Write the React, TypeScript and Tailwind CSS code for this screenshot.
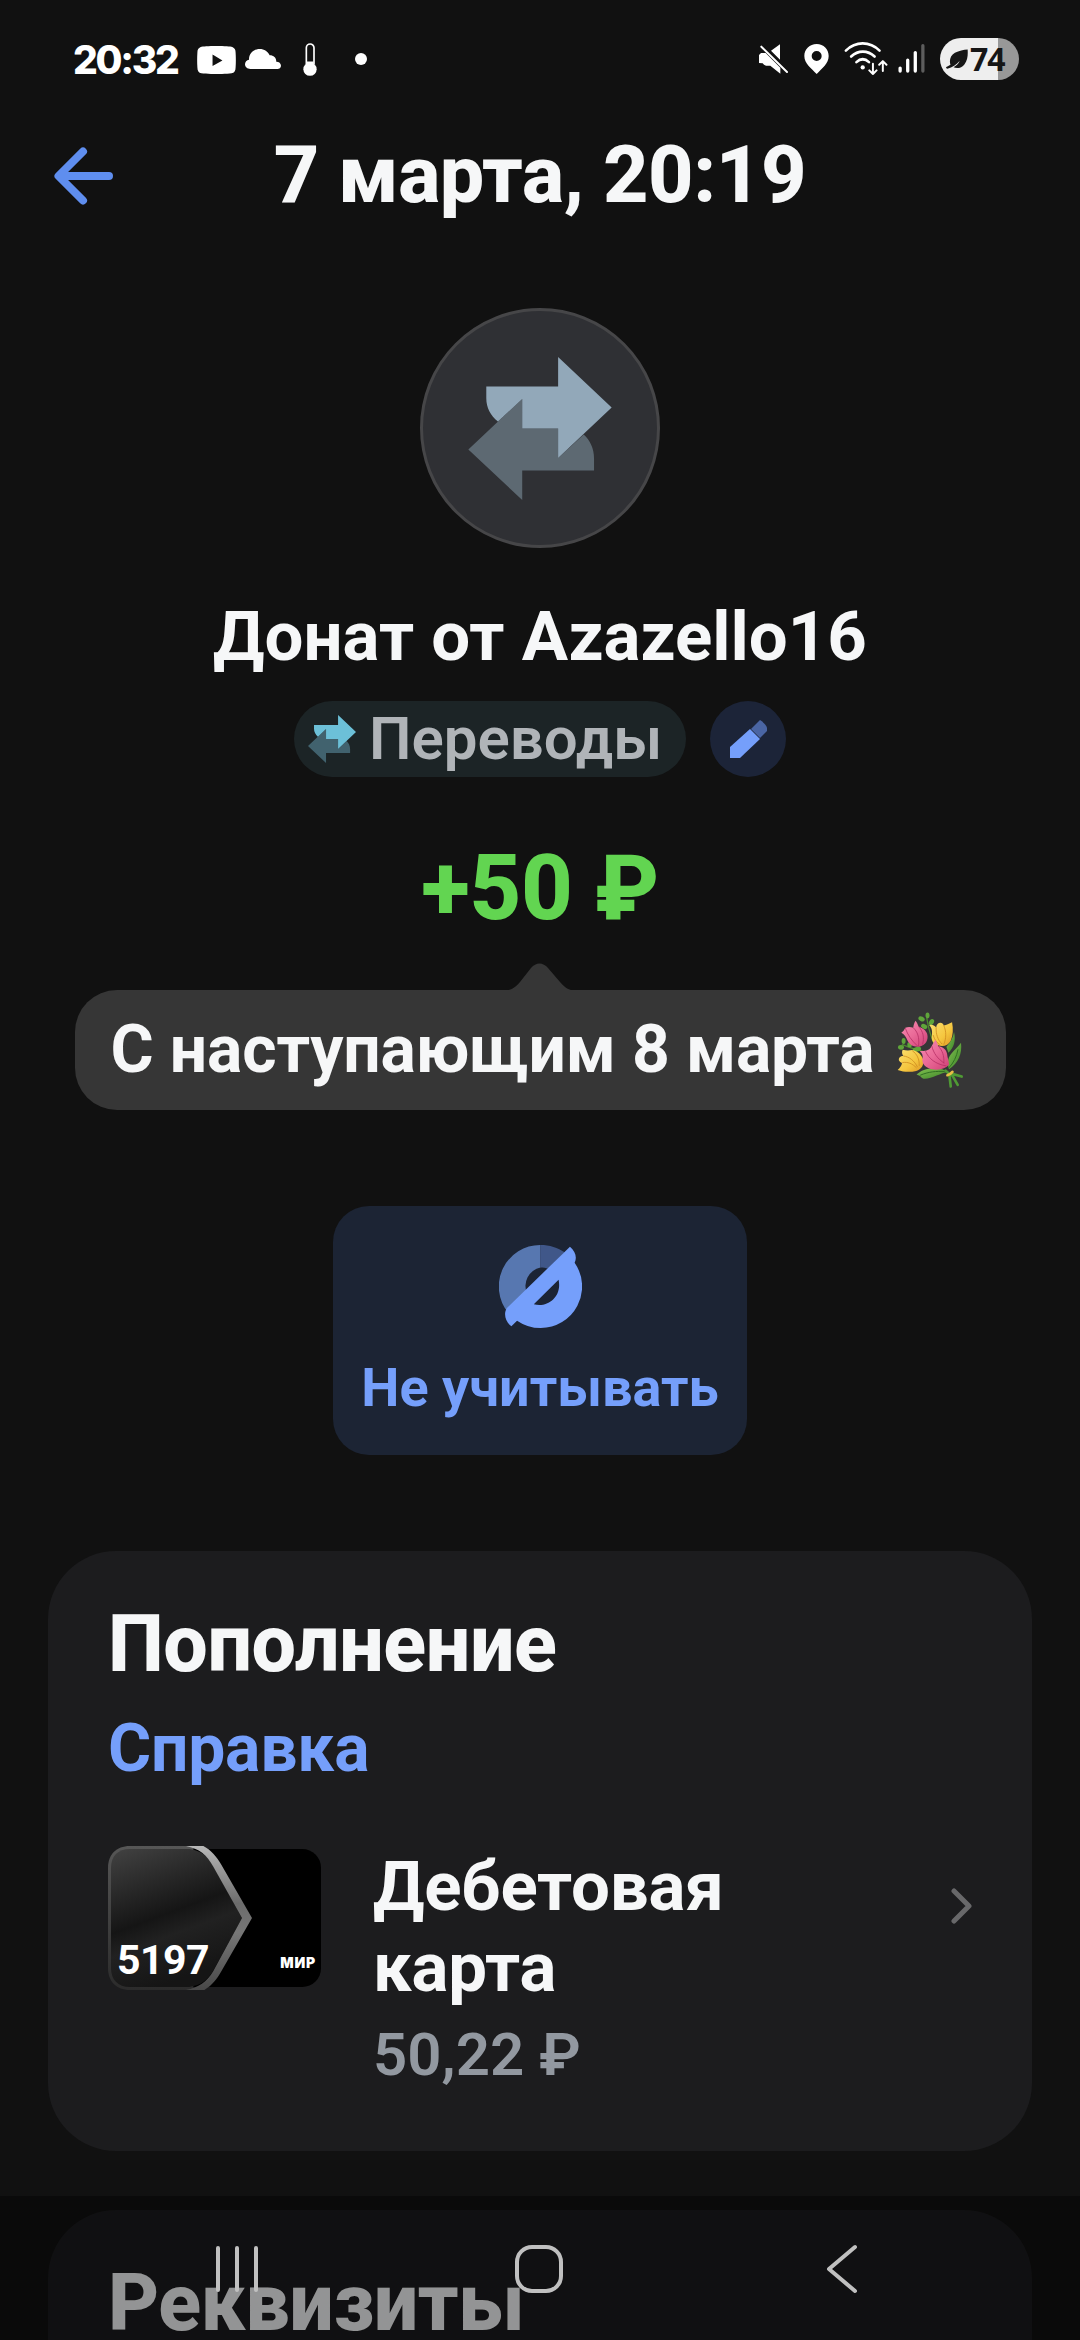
import type { ReactNode } from 'react';

interface TransferIconProps {
  front: string;
  back: string;
  className?: string;
}

function TransferIcon({ front, back, className }: TransferIconProps) {
  return (
    <svg viewBox="204 199 431 430" className={className} aria-hidden="true">
      <path fill={back} d="M366 325 204 477l162 152v-89h216v-36c0-30-12-54-31-72l-77 71v-89H366z" />
      <path fill={front} d="M258 288h216v-89l161 152-161 152v-89H366v-89l-73 68c-22-18-35-42-35-70z" />
    </svg>
  );
}

function StatusBar() {
  return (
    <div className="flex h-[120px] shrink-0 items-center justify-between pl-[73px] pr-[61px] text-white">
      <div className="flex h-full items-center">
        <span className="w-[124px] font-[Inter] text-[39px] font-extrabold leading-[48px] tracking-[-2.3px]">
          20:32
        </span>
        <svg viewBox="470 75 118 85" className="h-[28px] w-[39px]" aria-hidden="true">
          <path
            fill="#fff"
            fillRule="evenodd"
            d="M529 75c25 0 42 1 48 3 7 3 10 8 10 17 1 15 1 30 0 45 0 10-4 16-12 18-24 3-68 3-92 0-8-2-12-8-12-18-1-15-1-30 0-45 0-9 3-14 10-17 6-2 23-3 48-3zm-12 26v35l30-17z"
          />
        </svg>
        <svg viewBox="616 84 108 60" className="ml-[9px] mt-[-2px] h-[20px] w-[36px]" aria-hidden="true">
          <path fill="#fff" d="M632 144c-9 0-16-6-16-14 0-7 5-13 12-14 0-19 14-32 32-32 14 0 25 8 30 19 12 0 20 7 20 19 8 0 14 5 14 12 0 6-5 10-11 10z" />
        </svg>
        <svg viewBox="790 67 42 98" className="ml-[22px] mt-[-2px] h-[33px] w-[14px]" aria-hidden="true">
          <path fill="none" stroke="#fff" strokeWidth="5" d="M800 130V81a11 11 0 0 1 23 0v49" />
          <circle cx="811" cy="145" r="20" fill="#fff" />
          <path fill="#fff" d="M801 122h21v12h-21z" />
        </svg>
        <span className="ml-[38px] mt-[-2px] size-3 rounded-full bg-white" />
      </div>
      <div className="flex h-full items-center">
        <svg viewBox="118 72 87 90" className="mt-[-2px] h-[30px] w-[29px]" aria-hidden="true">
          <path fill="#fff" d="M181 73v46l-27-27zM124 99h14l44 44v18l-30-24h-13l-6-3-4-4-11-1V105z" />
          <path stroke="#fff" strokeWidth="6" strokeLinecap="round" d="M125 80 202 156" />
        </svg>
        <svg viewBox="254 71 73 90" className="ml-[16px] mt-[-3px] h-[30px] w-[25px]" aria-hidden="true">
          <path
            fill="#fff"
            fillRule="evenodd"
            d="M291 71c21 0 36 16 36 36 0 23-20 37-36 54-16-17-37-31-37-54 0-20 16-36 37-36zm0 21a15 15 0 1 0 0 30 15 15 0 0 0 0-30z"
          />
        </svg>
        <svg viewBox="373 65 132 100" className="ml-[15px] mt-[-3px] h-[33px] w-[44px]" aria-hidden="true">
          <g fill="none" stroke="#fff" strokeLinecap="round">
            <path strokeWidth="8" d="M378 91c30-29 72-29 102 0" />
            <path strokeWidth="8" d="M394 109c21-20 50-20 71 0" />
            <path strokeWidth="8" d="M410 126c12-11 26-11 38 0" />
            <path strokeWidth="6" strokeLinejoin="round" d="M460 131v31m-11-11 11 11 11-11M490 153v-30m-11 11 11-11 11 11" />
          </g>
          <circle cx="429" cy="142" r="6.500" fill="#fff" />
        </svg>
        <svg viewBox="534 72 81 88" className="ml-[10px] mt-[-3px] h-[29px] w-[27px]" aria-hidden="true">
          <g stroke="#fff" strokeWidth="10" strokeLinecap="round">
            <path d="M540 145v9M563 121v33M586 98v56" />
            <path stroke="#5d5d5d" d="M609 77v77" />
          </g>
        </svg>
        <div className="ml-[15px] mt-[-2px] flex h-[42px] w-[79px] items-center rounded-full bg-[linear-gradient(90deg,#eeeeee_58px,#989898_58px)] pl-[6px] text-[#161616]">
          <svg viewBox="679 86 64 58" className="h-[20px] w-[22px]" aria-hidden="true">
            <path fill="#161616" d="M692 132c-4-12-1-27 13-35 12-7 25-9 37-10 1 16 0 31-9 43-8 11-22 14-32 9 7-4 14-10 18-19-10 11-21 20-36 23-5 0-5-5 0-6z" />
          </svg>
          <span className="ml-[2px] font-['Open_Sans'] text-[32px] font-bold leading-[40px] tracking-[-1px]">74</span>
        </div>
      </div>
    </div>
  );
}

function Header() {
  return (
    <header className="relative flex h-[110px] shrink-0 items-center justify-center">
      <button aria-label="Назад" className="absolute left-[54px] top-[27px]">
        <svg viewBox="0 0 60 58" className="h-[58px] w-[60px]" fill="none" aria-hidden="true">
          <path stroke="#5f8eef" strokeWidth="8" strokeLinecap="round" strokeLinejoin="round" d="M29 4.500 4.500 29 29 53.500M5 29h50" />
        </svg>
      </button>
      <h1 className="text-[79px] font-extrabold leading-[92px] tracking-[-0.4px]">7 марта, 20:19</h1>
    </header>
  );
}

function Bouquet() {
  return (
    <svg viewBox="48 36 202 228" className="h-[76px] w-[67px] shrink-0" aria-hidden="true">
      <defs>
        <linearGradient id="pink" x1="0" y1="0" x2="1" y2="1">
          <stop offset="0" stopColor="#f58db0" />
          <stop offset="0.5" stopColor="#ea6a98" />
          <stop offset="1" stopColor="#cf3f75" />
        </linearGradient>
        <linearGradient id="yellow" x1="0" y1="0" x2="1" y2="1">
          <stop offset="0" stopColor="#fbe070" />
          <stop offset="0.6" stopColor="#f5c63e" />
          <stop offset="1" stopColor="#dd9724" />
        </linearGradient>
        <linearGradient id="leaf" x1="0" y1="0" x2="1" y2="1">
          <stop offset="0" stopColor="#82c250" />
          <stop offset="1" stopColor="#3c8428" />
        </linearGradient>
      </defs>
      <path fill="none" stroke="#4c8b2e" strokeWidth="4" strokeLinecap="round" d="M138 55c5 30 10 55 25 80M64 134c20 8 40 16 62 20" />
      <g fill="#5fa53a">
        <ellipse cx="140" cy="46" rx="6" ry="9" />
        <ellipse cx="122" cy="56" rx="10" ry="7" transform="rotate(25 122 56)" />
        <ellipse cx="152" cy="66" rx="7" ry="10" transform="rotate(30 152 66)" />
        <ellipse cx="130" cy="79" rx="10" ry="7" transform="rotate(30 130 79)" />
        <ellipse cx="68" cy="123" rx="6" ry="9" />
        <ellipse cx="60" cy="142" rx="9" ry="7" />
        <ellipse cx="86" cy="134" rx="7" ry="8" />
        <ellipse cx="108" cy="148" rx="13" ry="7" transform="rotate(-15 108 148)" />
      </g>
      <path fill="url(#leaf)" d="M220 96c6 26 0 48-17 62l-6-18c12-12 20-26 23-44z" />
      <path fill="url(#leaf)" d="M241 128c4 34-8 60-36 80-6-16-5-32 6-46 10-13 22-22 30-34z" />
      <path fill="url(#leaf)" d="M107 224c18-18 44-22 78-16l16 8c-20 2-46 20-70 21-10 0-8-8-24-13z" />
      <path fill="none" stroke="#2f6f22" strokeWidth="3" d="M232 148c-4 22-14 42-28 56M118 226c24-10 48-13 76-11" />
      <path
        fill="url(#yellow)"
        d="M145 75c8-3 15 0 21 7 1-9 6-14 13-14 5 0 8 3 10 8 8-2 16-6 25-10 4 20 3 40-4 56-7 14-22 19-38 14-14-4-21-14-19-28 2-13 1-23-8-33z"
      />
      <path fill="none" stroke="#d08e21" strokeWidth="2.500" d="M166 82c-1 20 5 38 18 50M189 76c8 18 8 38 0 58M157 105c4 14 10 22 20 29" />
      <path
        fill="url(#pink)"
        d="M61 98c5-3 9-8 12-15 8-3 16-3 24 0 1-8 3-15 7-21 4 5 6 10 9 17 13 5 23 12 26 23 5 18-5 35-24 38-17 2-30-6-36-20-4-10-9-18-18-22z"
      />
      <path fill="none" stroke="#b83267" strokeWidth="2.500" d="M73 84c7 20 19 38 37 54M97 83c13 12 19 28 16 55M113 79c14 15 18 34 12 54" />
      <path
        fill="url(#yellow)"
        d="M54 182c-2-8 4-14 13-14-4-7-5-12-2-19 10 3 19 3 29 1 17 3 28 14 33 29 3 16-5 30-21 34-18 4-37 4-56-3 8-7 12-13 13-21-4-1-7-3-9-7z"
      />
      <path fill="none" stroke="#d08e21" strokeWidth="2.500" d="M67 168c18 2 34 15 43 34M64 188c17-3 30 3 43 16M94 152c14 10 22 25 21 46" />
      <path
        fill="url(#pink)"
        d="M117 153c9 1 17 0 25-4 10-2 12-18 22-29 4 6 7 12 8 18 15 3 25 11 27 24 1 11 5 18 6 32-10 13-30 18-51 14-19-4-32-16-29-31 2-10-1-17-8-24z"
      />
      <path fill="none" stroke="#b83267" strokeWidth="2.500" d="M134 154c10 22 30 39 63 44M153 138c5 22 18 39 38 52M172 138c13 13 19 30 17 52" />
      <path stroke="#4f9a34" strokeWidth="8" strokeLinecap="round" d="m194 212 16 14M206 226l4 34M212 222l19 33M214 222l29 8" />
      <path stroke="#e8bf45" strokeWidth="8" strokeLinecap="round" d="M200 226c6-2 12-6 15-10" fill="none" />
    </svg>
  );
}

function Message({ children }: { children: ReactNode }) {
  return (
    <div className="mt-[24px] flex flex-col items-center">
      <svg viewBox="0 0 70 28" className="-mb-px h-[28px] w-[70px]" aria-hidden="true">
        <path fill="#363636" d="M0 28c6-1 10-3 15-9L26 5c5-6 12-6 17 0l12 14c5 6 9 8 15 9z" />
      </svg>
      <div className="flex h-[120px] w-[931px] items-center rounded-[42px] bg-[#363636] pl-[36px]">
        <p className="w-[786px] whitespace-nowrap text-[66px] font-bold leading-[80px] tracking-[-0.15px]">{children}</p>
        <Bouquet />
      </div>
    </div>
  );
}

function ExcludeIcon() {
  return (
    <svg viewBox="533 167 248 248" className="size-[83px]" aria-hidden="true">
      <path fill="#5777b0" d="M657 167A124 124 0 0 0 560 369L617 313A57 57 0 0 1 657 234z" />
      <path fill="#405789" d="M657 167c27 0 52 8 72 22l-49 49c-7-3-15-4-23-4z" />
      <path
        fill="#759ffb"
        fillRule="evenodd"
        d="M745 172c16 14 22 31 14 48A124 124 0 0 1 657 415A124 124 0 0 1 587 393l-17 17c-18-13-24-37-14-54zM711 271l-74 73c41 12 85-23 74-73z"
      />
    </svg>
  );
}

function BankCard() {
  return (
    <div className="relative h-[144px] w-[213px] shrink-0">
      <svg viewBox="54 78 639 432" className="h-full w-full" aria-hidden="true">
        <defs>
          <linearGradient id="face" x1="0" y1="0" x2="0.35" y2="1">
            <stop offset="0" stopColor="#424242" />
            <stop offset="0.55" stopColor="#151515" />
            <stop offset="0.7" stopColor="#212121" />
            <stop offset="1" stopColor="#151515" />
          </linearGradient>
          <linearGradient id="edge" x1="0" y1="0" x2="0" y2="1">
            <stop offset="0" stopColor="#b8b8b8" />
            <stop offset="0.4" stopColor="#6c6c6c" />
            <stop offset="0.6" stopColor="#777" />
            <stop offset="1" stopColor="#484848" />
          </linearGradient>
          <linearGradient id="rim" x1="0" y1="0" x2="0" y2="1">
            <stop offset="0" stopColor="#565656" />
            <stop offset="1" stopColor="#2b2b2b" />
          </linearGradient>
        </defs>
        <rect x="250" y="87" width="443" height="414" rx="56" />
        <path fill="url(#rim)" d="M120 78h190v432H120c-42 0-66-26-66-66V144c0-40 24-66 66-66z" />
        <path fill="url(#face)" d="M120 87h178c35 5 56 22 74 54l84 153-84 154c-18 32-39 48-74 53H120c-37 0-57-22-57-57V144c0-35 20-57 57-57z" />
        <path fill="url(#edge)" d="M288 78h52c24 13 40 32 54 56l92 160-92 160c-14 24-27 42-51 56h-55c38-7 62-24 82-57l86-159-86-154c-20-36-42-54-82-62z" />
      </svg>
      <span className="absolute bottom-[6px] left-[9px] text-[41px] font-bold leading-[48px] tracking-[-0.5px] text-white">
        5197
      </span>
      <span className="absolute bottom-[17px] right-[5px] font-[Inter] text-[14px] font-black leading-[20px] tracking-[0.8px] text-white">
        МИР
      </span>
    </div>
  );
}

function Section({ title, children, className }: { title: string; children?: ReactNode; className: string }) {
  return (
    <section className={`mx-[48px] shrink-0 rounded-[68px] bg-[#1c1c1e] px-[60px] pt-[57px] ${className}`}>
      <h2 className="text-[79px] font-extrabold leading-[72px] tracking-[-0.4px]">{title}</h2>
      {children}
    </section>
  );
}

function NavBar() {
  return (
    <nav className="absolute inset-x-0 bottom-0 flex h-[144px] bg-black/40">
      <svg viewBox="0 0 1080 144" className="h-full w-full" fill="none" stroke="#c0c0c0" strokeLinecap="round" strokeLinejoin="round" aria-hidden="true">
        <path strokeWidth="4" d="M218 52v42M237 52v42M256 52v42" />
        <rect x="517" y="51" width="44" height="44" rx="15" strokeWidth="4" />
        <path strokeWidth="4" d="M855 51 829 73l26 22" />
      </svg>
    </nav>
  );
}

export default function App() {
  return (
    <div className="relative flex h-[2340px] w-[1080px] flex-col overflow-hidden bg-[#111111] font-[Roboto,'Noto_Sans',sans-serif] text-[#f6f7f8]">
      <StatusBar />
      <Header />

      <main className="flex flex-col items-center">
        <div className="mt-[78px] flex size-[240px] items-center justify-center rounded-full border-[3px] border-[#464648] bg-[#2f3034]">
          <TransferIcon front="#92a8b9" back="#5d6972" className="h-[143px] w-[144px]" />
        </div>
        <h2 className="mt-[49px] text-[69px] font-bold leading-[80px]">Донат от Azazello16</h2>

        <div className="mt-[24px] flex gap-[24px]">
          <div className="flex h-[76px] w-[392px] items-center rounded-full bg-[#1c2426] pl-[14px]">
            <TransferIcon front="#6cc0d8" back="#41626e" className="size-[48px]" />
            <span className="ml-[13px] text-[60px] font-semibold leading-[70px] text-[#b0b4b8]">Переводы</span>
          </div>
          <button aria-label="Изменить" className="flex size-[76px] items-center justify-center rounded-full bg-[#1c2438]">
            <svg viewBox="0 0 38 38" className="size-[38px]" aria-hidden="true">
              <path fill="#4a65a3" d="m22 9 9-9c6 4 8 8 7 11l-7 7z" />
              <path fill="#759ffb" d="m21 9 10 10-20 19H1V27z" />
            </svg>
          </button>
        </div>

        <div className="mt-[62px] text-[90px] font-extrabold leading-[100px] tracking-[-0.3px] text-[#62d551]">+50 ₽</div>
        <Message>С наступающим 8 марта</Message>

        <button className="mt-[96px] flex h-[249px] w-[414px] flex-col items-center rounded-[36px] bg-[#1c2434] pt-[39px]">
          <ExcludeIcon />
          <span className="mt-[30px] whitespace-nowrap text-[54px] font-bold leading-[60px] text-[#759ffb]">
            Не учитывать
          </span>
        </button>
      </main>

      <Section title="Пополнение" className="mt-[96px] h-[600px]">
        <a className="mt-[33px] block text-[66px] font-bold leading-[72px] tracking-[-0.2px] text-[#759ffb]">Справка</a>
        <div className="mt-[61px] flex">
          <BankCard />
          <div className="ml-[52px] w-[440px]">
            <p className="text-[69px] font-bold leading-[81px] tracking-[-0.2px]">Дебетовая карта</p>
            <p className="mt-[12px] text-[60px] font-semibold leading-[70px] text-[#9298a0]">50,22 ₽</p>
          </div>
          <svg viewBox="0 0 21 36" className="ml-auto mr-0 mt-[42px] h-[36px] w-[21px]" fill="none" aria-hidden="true">
            <path stroke="#68686a" strokeWidth="5" strokeLinecap="round" strokeLinejoin="round" d="m3 3 15 15L3 33" />
          </svg>
        </div>
      </Section>
      <Section title="Реквизиты" className="mt-[59px] h-[400px]" />
      <NavBar />
    </div>
  );
}
